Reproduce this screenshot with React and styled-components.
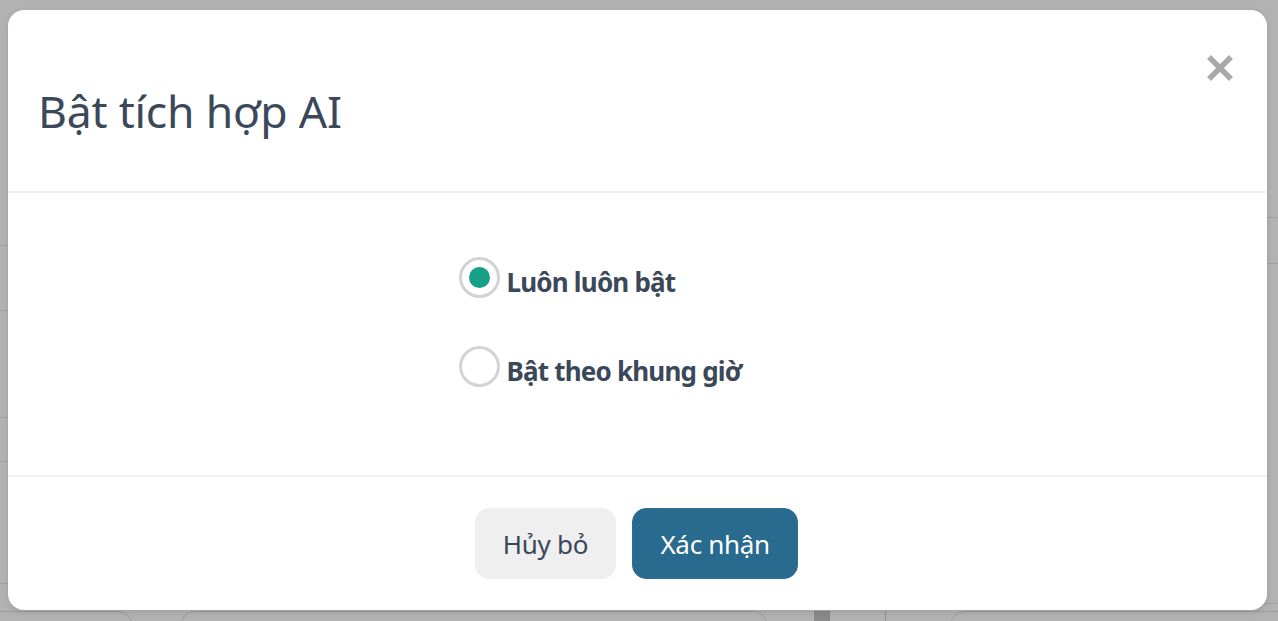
import React, { useState } from "react";
import styled, { createGlobalStyle } from "styled-components";

const Global = createGlobalStyle`
  html, body { margin: 0; padding: 0; }
  body { font-family: "Noto Sans", "Liberation Sans", sans-serif; background: #b2b2b2; }
  * { box-sizing: border-box; }
`;

const Backdrop = styled.div`
  position: relative;
  width: 1278px;
  height: 621px;
  overflow: hidden;
  background: #b2b2b2;
  padding: 10px 11px 11px 8px;
`;

const Under = styled.div`
  position: absolute;
  inset: 0;
  pointer-events: none;
`;

const UnderLine = styled.div`
  position: absolute;
  height: 1px;
  background: #a3a3a3;
  ${(p) => (p.$side === "right" ? "right: 0; width: 30px;" : "left: 0; width: 30px;")}
`;

const UnderPill = styled.div`
  position: absolute;
  top: 611px;
  height: 30px;
  border: 1px solid #9d9d9d;
  border-radius: 16px;
`;

const UnderBlock = styled.div`
  position: absolute;
  top: 611px;
  height: 20px;
  width: 16px;
  left: 814px;
  background: #8a8a8a;
`;

const UnderDivider = styled.div`
  position: absolute;
  top: 611px;
  height: 20px;
  width: 1px;
  left: 885px;
  background: #909090;
`;

const Modal = styled.div`
  position: relative;
  height: 100%;
  background: #fff;
  border-radius: 16px;
  display: flex;
  flex-direction: column;
  box-shadow: 0 2px 6px rgba(0, 0, 0, 0.12);
`;

const Header = styled.div`
  height: 183px;
  display: flex;
  align-items: center;
  justify-content: space-between;
  padding: 0 33px 0 30px;
  border-bottom: 2px solid #f1f1f1;
`;

const Title = styled.h1`
  margin: 20px 0 0 0;
  font-weight: 400;
  font-size: 44.5px;
  color: #3b4859;
  letter-spacing: -0.2px;
`;

const CloseButton = styled.button`
  align-self: flex-start;
  margin-top: 44px;
  width: 28px;
  height: 28px;
  padding: 0;
  border: none;
  background: none;
  cursor: pointer;
  display: flex;
  align-items: center;
  justify-content: center;
`;

const Body = styled.div`
  flex: 1;
  display: flex;
  justify-content: center;
  padding-top: 64px;
  border-bottom: 2px solid #f1f1f1;
`;

const RadioGroup = styled.div`
  width: 358px;
  display: flex;
  flex-direction: column;
  gap: 48px;
`;

const RadioRow = styled.label`
  display: flex;
  align-items: center;
  gap: 7px;
  cursor: pointer;
`;

const RadioCircle = styled.span`
  width: 41px;
  height: 41px;
  border-radius: 50%;
  border: 3px solid #d3d3d3;
  display: flex;
  align-items: center;
  justify-content: center;
  flex-shrink: 0;
  &::after {
    content: "";
    width: 21px;
    height: 21px;
    border-radius: 50%;
    background: ${(p) => (p.$checked ? "#16a085" : "transparent")};
  }
`;

const RadioLabel = styled.span`
  font-size: 26px;
  font-weight: 700;
  color: #3b4859;
  letter-spacing: -0.8px;
  position: relative;
  top: 4px;
`;

const Footer = styled.div`
  height: 133px;
  display: flex;
  align-items: center;
  justify-content: center;
  gap: 16px;
  padding-right: 2px;
`;

const Button = styled.button`
  height: 71px;
  border-radius: 14px;
  font-family: inherit;
  font-size: 26px;
  padding: 0 ${(p) => (p.$primary ? "26px" : "27px")};
  min-width: ${(p) => (p.$primary ? "166px" : "141px")};
  border: 1px solid ${(p) => (p.$primary ? "#2f6f95" : "#efefef")};
  background: ${(p) => (p.$primary ? "#296a8f" : "#efefef")};
  color: ${(p) => (p.$primary ? "#ffffff" : "#3b4859")};
  cursor: pointer;
  letter-spacing: -0.3px;
`;

export default function App() {
  const [value, setValue] = useState("always");
  const options = [
    { id: "always", label: "Luôn luôn bật" },
    { id: "schedule", label: "Bật theo khung giờ" },
  ];
  const leftLines = [245, 310, 417, 461, 583];
  const rightLines = [217, 263, 603];
  return (
    <>
      <Global />
      <Backdrop>
        <Under>
          {leftLines.map((y) => (
            <UnderLine key={"l" + y} style={{ top: y }} />
          ))}
          {rightLines.map((y) => (
            <UnderLine key={"r" + y} $side="right" style={{ top: y }} />
          ))}
          <UnderPill style={{ left: -40, width: 173 }} />
          <UnderPill style={{ left: 180, width: 588 }} />
          <UnderBlock />
          <UnderDivider />
          <UnderPill style={{ left: 950, width: 360 }} />
        </Under>
        <Modal>
          <Header>
            <Title>Bật tích hợp AI</Title>
            <CloseButton aria-label="Đóng">
              <svg width="28" height="28" viewBox="0 0 28 28">
                <path d="M3 3 L25 25 M25 3 L3 25" stroke="#a9a9a9" strokeWidth="5.5" />
              </svg>
            </CloseButton>
          </Header>
          <Body>
            <RadioGroup>
              {options.map((o) => (
                <RadioRow key={o.id} onClick={() => setValue(o.id)}>
                  <RadioCircle $checked={value === o.id} />
                  <RadioLabel>{o.label}</RadioLabel>
                </RadioRow>
              ))}
            </RadioGroup>
          </Body>
          <Footer>
            <Button>Hủy bỏ</Button>
            <Button $primary>Xác nhận</Button>
          </Footer>
        </Modal>
      </Backdrop>
    </>
  );
}
